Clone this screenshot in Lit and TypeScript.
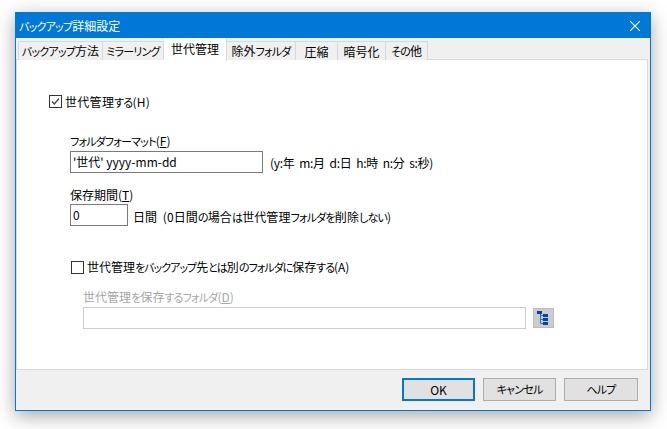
import { LitElement, html, css } from "lit";
import { customElement } from "lit/decorators.js";

// The reference's UI font sets kana much narrower than kanji, so kana runs get their own class.
const jp = (text: string) =>
  text
    .split(/([\u3040-\u30ff]+)/)
    .map((part, i) => (i % 2 ? html`<span class="kana">${part}</span>` : part));

@customElement("app-root")
export class AppRoot extends LitElement {
  static styles = css`
    :host {
      display: block;
      width: 667px;
      height: 429px;
      box-sizing: border-box;
      padding: 12px 16px 18px 15px;
      background: #fff;
      font-family: "Noto Sans CJK JP", "Noto Sans", sans-serif;
      font-size: 12px;
      line-height: 15px;
      font-feature-settings: "palt";
      color: #000;
      overflow: hidden;
    }
    .kana { font-size: 11px; letter-spacing: -0.8px; }
    .window {
      box-sizing: border-box;
      width: 636px;
      height: 399px;
      border: 1px solid #0078d7;
      background: #f0f0f0;
      display: flex;
      flex-direction: column;
      box-shadow: 0 5px 18px rgba(0, 0, 0, 0.35);
    }
    .titlebar {
      height: 25px;
      flex: none;
      background: #0078d7;
      color: #fff;
      display: flex;
      align-items: center;
      justify-content: space-between;
      padding: 0 10px 0 3px;
    }
    .close { display: block; }
    .tabs {
      flex: none;
      height: 22px;
      padding-left: 2px;
      display: flex;
      align-items: flex-end;
      margin-bottom: -1px;
      position: relative;
    }
    .tab {
      box-sizing: border-box;
      height: 19px;
      border: 1px solid #d9d9d9;
      border-left-width: 0;
      border-bottom-width: 0;
      background: #f0f0f0;
      display: flex;
      align-items: center;
      justify-content: center;
      white-space: nowrap;
    }
    .tab:first-child { border-left-width: 1px; }
    .tab.active {
      height: 23px;
      margin-bottom: -1px;
      background: #fff;
      border: 0;
      border-right: 1px solid #d9d9d9;
      padding-bottom: 2px;
    }
    .panel {
      flex: none;
      box-sizing: border-box;
      width: 632px;
      height: 311px;
      border: 1px solid #d9d9d9;
      background: #fff;
      padding: 34px 0 0 32px;
    }
    .panel-body { display: flex; flex-direction: column; align-items: flex-start; }
    .check { display: flex; align-items: center; gap: 3px; height: 15px; }
    .check.main { letter-spacing: 0.3px; }
    .box {
      box-sizing: border-box;
      width: 13px;
      height: 13px;
      border: 1px solid #333;
      background: #fff;
      display: block;
      flex: none;
    }
    .group { margin-left: 21px; display: flex; flex-direction: column; align-items: flex-start; }
    .format-label { margin-top: 24px; }
    .keep-label { margin-top: 14px; }
    .field-row { display: flex; align-items: center; margin-top: 2px; }
    .field {
      box-sizing: border-box;
      height: 22px;
      border: 1px solid #7a7a7a;
      background: #fff;
      padding: 0 2px 2px;
      display: flex;
      align-items: center;
      white-space: pre;
    }
    .field.format { width: 193px; }
    .field.days { width: 58px; }
    .hint { margin-left: 7px; white-space: pre; letter-spacing: -0.3px; }
    .hint.days-hint { margin-left: 5px; padding-top: 4px; letter-spacing: 0.1px; }
    .check.other { margin: 34px 0 0 22px; }
    .check.other .kana { letter-spacing: -1px; }
    .check.other .label { margin-bottom: 2px; }
    .dest { margin: 14px 0 0 34px; color: #a6a6a6; }
    .dest-row { display: flex; align-items: center; gap: 7px; margin-top: 2px; }
    .field.dest-field { width: 443px; border-color: #cccccc; }
    .picker {
      box-sizing: border-box;
      width: 21px;
      height: 20px;
      background: #cccccc;
      border: 1px solid #bdbdbd;
      display: flex;
      align-items: center;
      justify-content: center;
    }
    .picker svg { margin-right: 2px; }
    .footer {
      flex: 1;
      display: flex;
      justify-content: flex-end;
      align-items: flex-start;
      gap: 8px;
      padding: 8px 12px 0 0;
    }
    .btn {
      box-sizing: border-box;
      width: 73px;
      height: 23px;
      border: 1px solid #adadad;
      background: #e1e1e1;
      display: flex;
      align-items: center;
      justify-content: center;
    }
    .btn.wide { width: 74px; }
    .btn.default { border: 2px solid #0078d7; }
  `;

  render() {
    const tabs: [string, number, boolean][] = [
      ["バックアップ方法", 85, false],
      ["ミラーリング", 61, false],
      ["世代管理", 63, true],
      ["除外フォルダ", 69, false],
      ["圧縮", 42, false],
      ["暗号化", 48, false],
      ["その他", 42, false],
    ];
    return html`
      <div class="window">
        <div class="titlebar">
          <span>${jp("バックアップ詳細設定")}</span>
          <svg class="close" width="10" height="10" viewBox="0 0 10 10">
            <path d="M0 0L10 10M10 0L0 10" stroke="#fff" stroke-width="1.1" fill="none" />
          </svg>
        </div>
        <div class="tabs">
          ${tabs.map(
            ([t, w, a]) =>
              html`<div class="tab ${a ? "active" : ""}" style="width:${w}px"><span>${jp(t)}</span></div>`
          )}
        </div>
        <div class="panel">
          <div class="panel-body">
            <label class="check main">
              <svg class="box" viewBox="0 0 11 11" width="13" height="13">
                <path d="M2 5.5L4.3 8L9 2.5" stroke="#444" stroke-width="1.2" fill="none" />
              </svg>
              <span>${jp("世代管理する(H)")}</span>
            </label>
            <div class="group">
              <div class="format-label">${jp("フォルダフォーマット")}(<u>F</u>)</div>
              <div class="field-row">
                <div class="field format">'世代' yyyy-mm-dd</div>
                <span class="hint">(y:年  m:月  d:日  h:時  n:分  s:秒)</span>
              </div>
              <div class="keep-label">保存期間(<u>T</u>)</div>
              <div class="field-row">
                <div class="field days">0</div>
                <span class="hint days-hint">${jp("日間  (0日間の場合は世代管理フォルダを削除しない)")}</span>
              </div>
            </div>
            <label class="check other">
              <span class="box"></span>
              <span class="label">${jp("世代管理をバックアップ先とは別のフォルダに保存する(A)")}</span>
            </label>
            <div class="dest">
              <div>${jp("世代管理を保存するフォルダ")}(<u>D</u>)</div>
              <div class="dest-row">
                <div class="field dest-field"></div>
                <div class="picker">
                  <svg width="11" height="14" viewBox="0 0 11 14">
                    <path d="M3.5 3V12.5M3.5 4.5H6M3.5 8.5H6M3.5 12.5H6" stroke="#1e78d8" fill="none" />
                    <rect x="0" y="0" width="5" height="3" fill="#0a3fb0" />
                    <rect x="6" y="3" width="5" height="3" fill="#0a3fb0" />
                    <rect x="6" y="7" width="5" height="3" fill="#0a3fb0" />
                    <rect x="6" y="11" width="5" height="3" fill="#0a3fb0" />
                  </svg>
                </div>
              </div>
            </div>
          </div>
        </div>
        <div class="footer">
          <div class="btn default">OK</div>
          <div class="btn">${jp("キャンセル")}</div>
          <div class="btn wide">${jp("ヘルプ")}</div>
        </div>
      </div>
    `;
  }
}
